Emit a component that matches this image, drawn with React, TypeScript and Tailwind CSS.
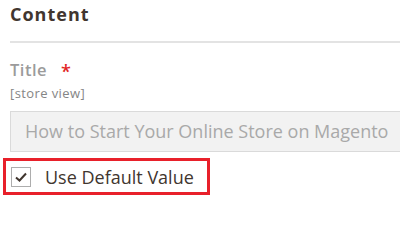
import React from "react";

export default function App() {
  return (
    <div className="w-[400px] h-[218px] bg-white overflow-hidden" style={{ fontFamily: '"Open Sans", "Noto Sans", sans-serif' }}>
      <div className="flex flex-col pl-[10px] pt-[2px]">
        <div className="text-[18px] leading-[24px] font-bold tracking-[1px] text-[#41362f]">Content</div>
        <div className="mt-[15px] h-[2px] bg-[#e3e3e3]" />
        <div className="mt-[17px] flex items-start text-[16.5px] leading-[20px] font-semibold tracking-[0.5px] text-[#9b9b9b]">
          <span>Title</span>
          <span className="ml-[14px] text-[#e22626] text-[18px] leading-[22px]">*</span>
        </div>
        <div className="mt-[4px] text-[13px] leading-[14px] tracking-[0.4px] text-[#858585]">[store view]</div>
        <div className="mt-[11px] h-[41px] flex items-center pl-[14px] border border-r-0 border-[#dadada] bg-[#f2f2f2] text-[18px] text-[#a9a9a9] whitespace-nowrap overflow-hidden">
          How to Start Your Online Store on Magento
        </div>
        <div className="mt-[6px] -ml-[7px] w-[207px] h-[37px] border-[3px] border-[#e8202a] flex items-center pl-[5px]">
          <div className="w-[20px] h-[20px] border border-[#adadad] bg-white flex items-center justify-center">
            <svg width="14" height="12" viewBox="0 0 14 12">
              <path d="M2 6.5 L5.5 9.5 L12 2.5" fill="none" stroke="#41362f" strokeWidth="2" />
            </svg>
          </div>
          <span className="ml-[14px] text-[18px] leading-[24px] text-[#41362f]">Use Default Value</span>
        </div>
      </div>
    </div>
  );
}
